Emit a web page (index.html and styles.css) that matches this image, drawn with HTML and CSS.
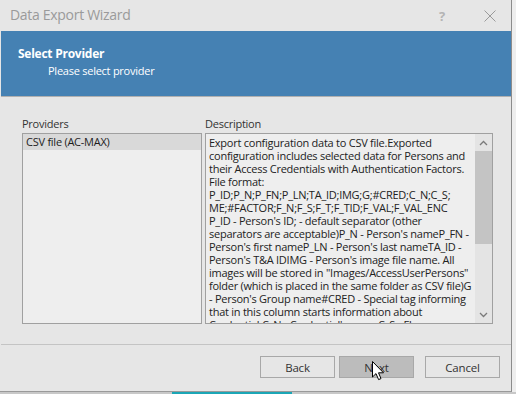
FILE: index.html
```html
<!DOCTYPE html>
<html lang="en">
<head>
    <meta charset="UTF-8">
    <title>Data Export Wizard</title>
    <link rel="stylesheet" href="styles.css">
</head>
<body>
    <div class="screen">
        <div class="window">
            <div class="titlebar">
                <div class="title">Data Export Wizard</div>
                <div class="help">?</div>
                <div class="close">
                    <svg width="12" height="12" viewBox="0 0 12 12"><path d="M0.5 0.5 L11.5 11.5 M11.5 0.5 L0.5 11.5" stroke="#9a9a9a" stroke-width="1" fill="none"/></svg>
                </div>
            </div>

            <div class="banner">
                <div class="banner-title">Select Provider</div>
                <div class="banner-sub">Please select provider</div>
            </div>

            <div class="content">
                <div class="col col-providers">
                    <div class="label">Providers</div>
                    <div class="listbox">
                        <div class="item selected">CSV file (AC-MAX)</div>
                    </div>
                </div>
                <div class="col col-desc">
                    <div class="label">Description</div>
                    <div class="textbox">
                        <div class="text">
                            <div>Export configuration data to CSV file.Exported</div>
                            <div>configuration includes selected data for Persons and</div>
                            <div>their Access Credentials with Authentication Factors.</div>
                            <div>File format:</div>
                            <div>P_ID;P_N;P_FN;P_LN;TA_ID;IMG;G;#CRED;C_N;C_S;</div>
                            <div>ME;#FACTOR;F_N;F_S;F_T;F_TID;F_VAL;F_VAL_ENC</div>
                            <div>P_ID - Person's ID; - default separator (other</div>
                            <div>separators are acceptable)P_N - Person's nameP_FN -</div>
                            <div>Person's first nameP_LN - Person's last nameTA_ID -</div>
                            <div>Person's T&amp;A IDIMG - Person's image file name. All</div>
                            <div>images will be stored in "Images/AccessUserPersons"</div>
                            <div>folder (which is placed in the same folder as CSV file)G</div>
                            <div>- Person's Group name#CRED - Special tag informing</div>
                            <div>that in this column starts information about</div>
                            <div>Credential C_N - Credential's nameC_S - Flag</div>
                        </div>
                        <div class="scrollbar">
                            <div class="arrow">
                                <svg width="9" height="6" viewBox="0 0 9 6"><path d="M1 5 L4.5 1.5 L8 5" stroke="#7a7a7a" stroke-width="1.3" fill="none"/></svg>
                            </div>
                            <div class="track">
                                <div class="thumb"></div>
                            </div>
                            <div class="arrow">
                                <svg width="9" height="6" viewBox="0 0 9 6"><path d="M1 1 L4.5 4.5 L8 1" stroke="#7a7a7a" stroke-width="1.3" fill="none"/></svg>
                            </div>
                        </div>
                    </div>
                </div>
            </div>

            <div class="footer">
                <button class="btn">Back</button>
                <button class="btn btn-hover">Next</button>
                <button class="btn btn-cancel">Cancel</button>
            </div>

            <svg class="cursor" width="13" height="20" viewBox="0 0 13 20">
                <path d="M0.5 0.5 L0.5 16 L4 12.6 L6.6 18.6 L9 17.6 L6.5 11.8 L11.5 11.8 Z" fill="#fff" stroke="#000" stroke-width="1"/>
            </svg>
        </div>
        <div class="taskbar">
            <div class="task-gap"></div>
            <div class="task-active"></div>
        </div>
    </div>
</body>
</html>
```

FILE: styles.css
```css
* {
    margin: 0;
    padding: 0;
    box-sizing: border-box;
}

body {
    background: #eeeeee;
    font-family: 'Open Sans', 'Noto Sans', sans-serif;
    font-size: 11px;
    letter-spacing: -0.25px;
    color: #1e1e1e;
    width: 516px;
    height: 394px;
    overflow: hidden;
}

.window {
    position: relative;
    width: 512px;
    height: 392px;
    background: #e6e6e6;
    border-right: 1px solid #8c8c8c;
    border-bottom: 1px solid #9a9a9a;
}

.titlebar {
    height: 31px;
    display: flex;
    align-items: center;
    padding-left: 10px;
}

.title {
    flex: 1;
    font-size: 14px;
    letter-spacing: -0.3px;
    color: #9a9a9a;
    padding-bottom: 2px;
}

.help {
    width: 54px;
    font-size: 13px;
    color: #b4b4b4;
    text-align: center;
    font-weight: bold;
}

.close {
    width: 42px;
    display: flex;
    justify-content: center;
}

.banner {
    margin-left: 1px;
    height: 66px;
    background: #4581b3;
    color: #fff;
    padding: 14px 0 0 17px;
    border-bottom: 1px solid #b0b0b0;
}

.banner-title {
    font-weight: bold;
    font-size: 12px;
    line-height: 17px;
}

.banner-sub {
    padding-left: 30px;
    line-height: 18px;
}

.content {
    display: flex;
    padding: 20px 0 0 21px;
    height: 248px;
    margin-left: 1px;
    border-bottom: 1px solid #c4c4c4;
}

.col-providers {
    width: 180px;
    margin-right: 3px;
}

.col-desc {
    width: 288px;
}

.label {
    height: 16px;
    line-height: 14px;
    color: #333;
}

.listbox, .textbox {
    height: 191px;
    border: 1px solid #a0a0a0;
    background: #eeeeee;
}

.item {
    height: 16px;
    line-height: 16px;
    padding-left: 3px;
}

.item.selected {
    background: #d9d9d9;
}

.textbox {
    display: flex;
    overflow: hidden;
}

.text {
    flex: 1;
    padding: 2px 0 0 3px;
    line-height: 13px;
    white-space: nowrap;
    overflow: hidden;
    color: #222;
}

.scrollbar {
    width: 17px;
    flex-shrink: 0;
    display: flex;
    flex-direction: column;
    background: #e4e4e4;
}

.arrow {
    height: 17px;
    display: flex;
    align-items: center;
    justify-content: center;
}

.track {
    flex: 1;
}

.thumb {
    height: 93px;
    background: #c4c4c4;
}

.footer {
    display: flex;
    justify-content: flex-end;
    padding: 11px 11px 0 0;
    gap: 4px;
}

.btn {
    width: 75px;
    height: 22px;
    border: 1px solid #a8a8a8;
    background: #e6e6e6;
    font-family: inherit;
    font-size: 11.5px;
    letter-spacing: -0.2px;
    color: #333;
}

.btn-hover {
    background: #bcbcbc;
}

.btn-cancel {
    margin-left: 7px;
}

.cursor {
    position: absolute;
    left: 372px;
    top: 361px;
}

.taskbar {
    height: 2px;
    display: flex;
    background: #c8c8c8;
}

.task-gap {
    width: 172px;
}

.task-active {
    width: 120px;
    background: #1ba6b6;
}
```
